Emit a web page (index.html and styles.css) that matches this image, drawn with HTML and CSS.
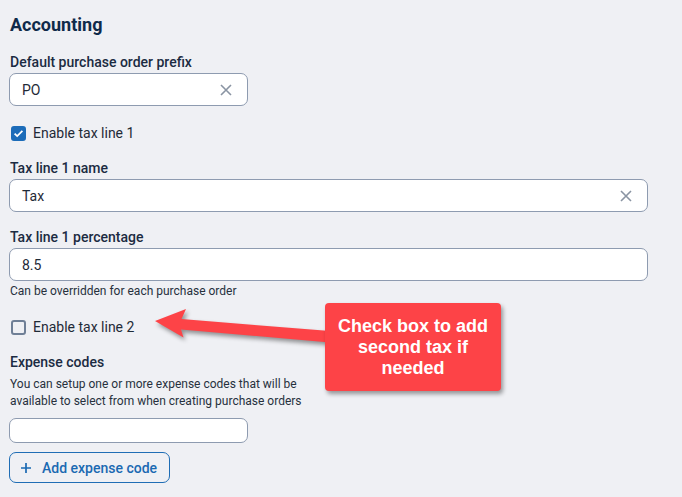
FILE: index.html
```html
<!DOCTYPE html>
<html lang="en">
<head>
<meta charset="utf-8">
<title>Accounting</title>
<link rel="stylesheet" href="styles.css">
</head>
<body>
<div class="page">
  <h2 class="title">Accounting</h2>

  <div class="field first">
    <label class="label">Default purchase order prefix</label>
    <div class="input short">
      <span class="value">PO</span>
      <svg class="clear" width="12" height="12" viewBox="0 0 12 12"><path d="M1 1 L11 11 M11 1 L1 11"/></svg>
    </div>
  </div>

  <div class="check-row">
    <span class="checkbox checked">
      <svg width="15" height="15" viewBox="0 0 15 15"><path d="M3.6 7.6 L6.2 10.1 L11.4 4.9"/></svg>
    </span>
    <span class="check-label">Enable tax line 1</span>
  </div>

  <div class="field">
    <label class="label">Tax line 1 name</label>
    <div class="input">
      <span class="value">Tax</span>
      <svg class="clear" width="12" height="12" viewBox="0 0 12 12"><path d="M1 1 L11 11 M11 1 L1 11"/></svg>
    </div>
  </div>

  <div class="field">
    <label class="label">Tax line 1 percentage</label>
    <div class="input">
      <span class="value">8.5</span>
    </div>
    <div class="hint">Can be overridden for each purchase order</div>
  </div>

  <div class="check-row second">
    <span class="checkbox"></span>
    <span class="check-label">Enable tax line 2</span>
  </div>

  <div class="field expense">
    <label class="label">Expense codes</label>
    <div class="hint tall">You can setup one or more expense codes that will be<br>available to select from when creating purchase orders</div>
    <div class="input short small"></div>
    <button class="add-btn" type="button">
      <svg width="10" height="10" viewBox="0 0 10 10"><path d="M5 0 V10 M0 5 H10"/></svg>
      <span>Add expense code</span>
    </button>
  </div>

  <svg class="arrow" width="682" height="497" viewBox="0 0 682 497">
    <polygon points="155,321 186,309 181.5,319 330,331 330,342.5 181,329.5 183.5,337.5"/>
  </svg>
  <div class="callout">Check box to add<br>second tax if<br>needed</div>
</div>
</body>
</html>
```

FILE: styles.css
```css
html, body {
  margin: 0;
  padding: 0;
  background: #eff0f4;
}

body {
  font-family: Roboto, "Noto Sans", "Liberation Sans", sans-serif;
  color: #1f2a37;
  width: 682px;
  height: 497px;
  overflow: hidden;
}

.page {
  position: relative;
  width: 639px;
  height: 497px;
  padding: 14px 0 0 9px;
  box-sizing: content-box;
}

.title {
  margin: 0;
  font-size: 18px;
  line-height: 22px;
  font-weight: 700;
  color: #0f2a4a;
  padding-left: 1px;
}

.field {
  display: flex;
  flex-direction: column;
  margin-top: 17px;
}

.field.first {
  margin-top: 18px;
}

.label {
  font-size: 14px;
  line-height: 16px;
  font-weight: 500;
  color: #1b2b42;
  padding-left: 1px;
  margin-bottom: 3px;
}

.input {
  box-sizing: border-box;
  height: 33px;
  width: 639px;
  background: #ffffff;
  border: 1px solid #8e9bb0;
  border-radius: 7px;
  display: flex;
  align-items: center;
  justify-content: space-between;
  padding: 0 15px 0 12px;
}

.input.short {
  width: 239px;
}

.input.small {
  height: 25px;
  margin-top: 8px;
}

.value {
  font-size: 14px;
  color: #1f2a37;
}

.clear {
  fill: none;
  stroke: #8a94a3;
  stroke-width: 1.6;
}

.hint {
  font-size: 12px;
  line-height: 16px;
  color: #27313d;
  margin-top: 2px;
  padding-left: 1px;
}

.hint.tall {
  line-height: 17px;
  margin-top: 3px;
  margin-bottom: 0;
}

.check-row {
  display: flex;
  align-items: center;
  height: 20px;
  margin-top: 17px;
  padding-left: 2px;
}

.check-row.second {
  margin-top: 18px;
}

.checkbox {
  box-sizing: border-box;
  width: 15px;
  height: 15px;
  border: 2px solid #6f7f96;
  border-radius: 3px;
  background: transparent;
  display: inline-flex;
}

.checkbox.checked {
  background: #1c6cb9;
  border-color: #1c6cb9;
}

.checkbox.checked svg {
  margin: -2px;
  fill: none;
  stroke: #ffffff;
  stroke-width: 1.8;
}

.check-label {
  font-size: 14px;
  margin-left: 7px;
  color: #1f2a37;
}

.field.expense {
  margin-top: 17px;
}

.add-btn {
  box-sizing: border-box;
  margin-top: 9px;
  align-self: flex-start;
  height: 31px;
  width: 161px;
  display: flex;
  align-items: center;
  padding: 0 0 0 11px;
  background: transparent;
  border: 1.5px solid #1f6db5;
  border-radius: 7px;
  color: #1a69b2;
  font-family: Roboto, "Noto Sans", "Liberation Sans", sans-serif;
  font-size: 14px;
  font-weight: 500;
}

.add-btn svg {
  fill: none;
  stroke: #1a69b2;
  stroke-width: 1.7;
  margin-right: 11px;
}

.arrow {
  position: absolute;
  left: 0;
  top: 0;
  pointer-events: none;
  fill: #fd4347;
  filter: drop-shadow(2px 3px 2px rgba(0, 0, 0, 0.4));
}

.callout {
  position: absolute;
  left: 325px;
  top: 303px;
  width: 176px;
  height: 88px;
  box-sizing: border-box;
  background: #fd4347;
  border-radius: 4px;
  box-shadow: 2px 3px 4px rgba(0, 0, 0, 0.38);
  color: #ffffff;
  font-family: Arial, "Liberation Sans", sans-serif;
  font-weight: 700;
  font-size: 18px;
  line-height: 21px;
  text-align: center;
  display: flex;
  align-items: center;
  justify-content: center;
}
```
